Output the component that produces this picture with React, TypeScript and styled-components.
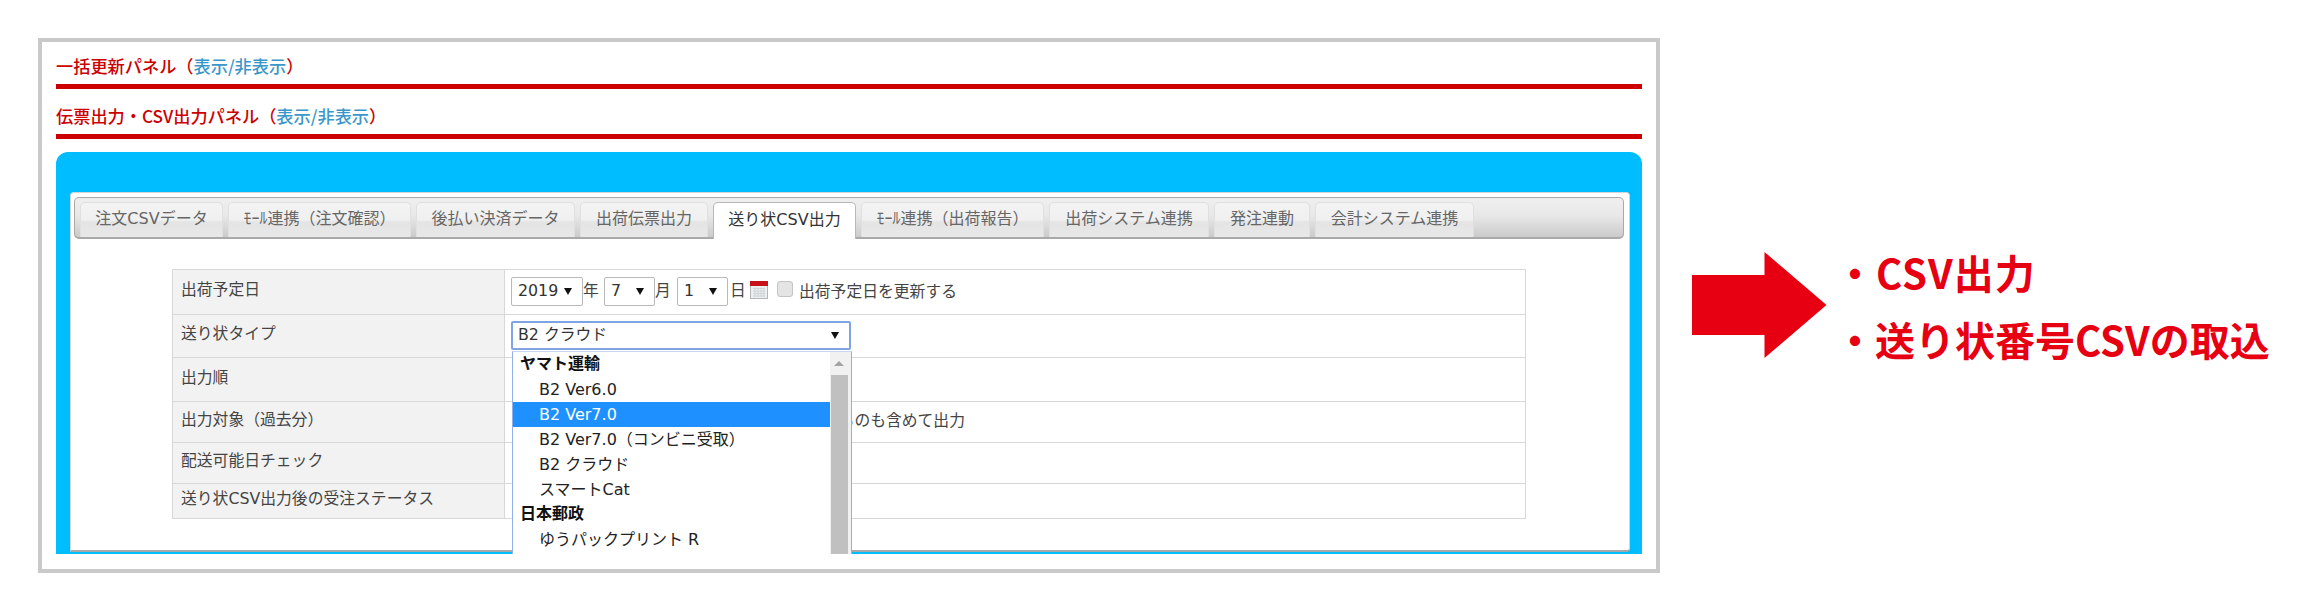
import React from "react";
import styled, { createGlobalStyle } from "styled-components";

const Global = createGlobalStyle`
  html, body { margin: 0; padding: 0; background: #fff; }
  body { font-family: "DejaVu Sans", "Noto Sans CJK JP", sans-serif; }
`;

const Page = styled.div`
  width: 2300px;
  height: 612px;
  box-sizing: border-box;
  padding: 38px 0 0 38px;
  display: flex;
  align-items: flex-start;
  overflow: hidden;
`;

const Frame = styled.div`
  width: 1622px;
  height: 535px;
  box-sizing: border-box;
  border: 4px solid #c9c9c9;
  padding: 0 14px;
  flex: none;
`;

const Heading = styled.div<{ $h: number }>`
  height: ${(p) => p.$h}px;
  box-sizing: border-box;
  display: flex;
  align-items: flex-end;
  padding-bottom: 8px;
  border-bottom: 5px solid #cc0000;
  font-family: "Noto Sans CJK JP", sans-serif;
  font-size: 17.2px;
  font-weight: 500;
  color: #cc0000;
  line-height: 20px;
`;

const Toggle = styled.a`
  color: #3a97c9;
`;

const Panel = styled.div`
  margin-top: 13px;
  height: 402px;
  box-sizing: border-box;
  background: #00bdff;
  border-radius: 12px 12px 0 0;
  padding: 40px 12px 0 14px;
  overflow: hidden;
`;

const Inner = styled.div`
  position: relative;
  height: 360px;
  box-sizing: border-box;
  background: #fff;
  border: 1px solid #d4d4d4;
  border-bottom: 2px solid #a8a8a8;
  border-radius: 4px 4px 4px 0;
  padding: 4px 5px 0 3px;
`;

const TabBar = styled.div`
  height: 42px;
  box-sizing: border-box;
  display: flex;
  align-items: flex-end;
  gap: 5px;
  padding: 0 0 0 5px;
  border: 1px solid #a9a9a9;
  border-bottom-width: 2px;
  border-radius: 5px;
  background: linear-gradient(#efefef 0%, #e8e8e8 45%, #cbcbcb 100%);
`;

const Tab = styled.div<{ $w: number; $active?: boolean }>`
  width: ${(p) => p.$w}px;
  height: ${(p) => (p.$active ? 37 : 35)}px;
  margin-bottom: ${(p) => (p.$active ? -2 : 0)}px;
  flex: none;
  box-sizing: border-box;
  display: flex;
  align-items: center;
  justify-content: center;
  padding-bottom: 3px;
  font-size: 16px;
  line-height: 1.2;
  white-space: nowrap;
  color: ${(p) => (p.$active ? "#333" : "#666")};
  border-radius: 5px 5px 0 0;
  border: 1px solid ${(p) => (p.$active ? "#b8b8b8" : "#e0e0e0")};
  border-bottom: none;
  background: ${(p) =>
    p.$active ? "#fff" : "linear-gradient(#f3f3f3 0%, #f0f0f0 50%, #e4e4e4 56%, #e8e8e8 100%)"};
`;

const FormTable = styled.table`
  width: 1354px;
  margin: 30px 0 0 98px;
  border-collapse: collapse;
  table-layout: fixed;
  font-size: 15.8px;
  line-height: 1.2;
  color: #444;
`;

const Row = styled.tr<{ $h: number }>`
  height: ${(p) => p.$h}px;
`;

const Th = styled.th`
  width: 332px;
  box-sizing: border-box;
  background: #f2f2f2;
  border: 1.5px solid #d8d8d8;
  font-weight: 400;
  text-align: left;
  padding: 0 0 3px 8px;
  white-space: nowrap;
`;

const Td = styled.td`
  border: 1.5px solid #d8d8d8;
  padding: 0 0 0 6px;
  vertical-align: middle;
`;

const DateLine = styled.div`
  display: flex;
  align-items: center;
  height: 28px;
  margin-top: -2px;
`;

const Select = styled.div<{ $w: number }>`
  width: ${(p) => p.$w}px;
  height: 29px;
  box-sizing: border-box;
  border: 1.5px solid #b9b9b9;
  border-radius: 2px;
  display: flex;
  align-items: center;
  justify-content: space-between;
  padding: 0 10px 0 6px;
  color: #333;
  background: #fff;
`;

const Caret = styled.span`
  width: 0;
  height: 0;
  border-left: 4px solid transparent;
  border-right: 4px solid transparent;
  border-top: 7px solid #111;
`;

const Unit = styled.span<{ $ml?: number; $w: number }>`
  width: ${(p) => p.$w}px;
  margin-left: ${(p) => p.$ml ?? 0}px;
  flex: none;
`;

const Calendar = styled.svg`
  margin: -3px 0 0 5px;
  flex: none;
`;

const Check = styled.span`
  width: 16px;
  height: 16px;
  box-sizing: border-box;
  margin: -4px 6px 0 9px;
  border: 1.5px solid #c4c4c4;
  border-radius: 3px;
  background: #e4e4e4;
  flex: none;
`;

const DateLabel = styled.span`
  margin-top: 2px;
  white-space: nowrap;
`;

const SelectWrap = styled.div`
  position: relative;
  width: 340px;
  height: 29px;
  margin-top: -1px;
`;

const OpenSelect = styled(Select)`
  width: 340px;
  border: 2px solid #7fa3e3;
  padding: 0 10px 0 5px;
`;

const Dropdown = styled.div`
  position: absolute;
  z-index: 2;
  left: 1px;
  top: 30px;
  width: 340px;
  height: 214px;
  box-sizing: border-box;
  display: flex;
  background: #fff;
  border: 1.5px solid #8fb0e8;
  border-top: 1px solid #c8d6ee;
  font-size: 16px;
`;

const List = styled.div`
  flex: 1;
  color: #222;
`;

const Group = styled.div`
  height: 25px;
  line-height: 24px;
  padding-left: 7px;
  font-weight: 700;
  color: #111;
`;

const Item = styled.div<{ $selected?: boolean }>`
  height: 25px;
  line-height: 25px;
  padding-left: 26px;
  background: ${(p) => (p.$selected ? "#1e90ff" : "transparent")};
  color: ${(p) => (p.$selected ? "#fff" : "#222")};
`;

const Scrollbar = styled.div`
  width: 21px;
  flex: none;
  background: #f1f1f1;
  display: flex;
  flex-direction: column;
  align-items: center;
  padding: 9px 3px 0 0;
  box-sizing: border-box;
`;

const ScrollUp = styled.span`
  width: 0;
  height: 0;
  border-left: 5px solid transparent;
  border-right: 5px solid transparent;
  border-bottom: 5px solid #a3a3a3;
`;

const Thumb = styled.div`
  width: 17px;
  margin-top: 9px;
  flex: 1;
  background: #c0c0c0;
`;

const BehindText = styled.div`
  margin: -1px 0 0 217px;
  white-space: nowrap;
`;

const Arrow = styled.svg`
  flex: none;
  margin: 214px 0 0 32px;
`;

const Notes = styled.div`
  margin: 201px 0 0 8px;
  font-family: "Noto Sans CJK JP", sans-serif;
  font-size: 40px;
  font-weight: 700;
  line-height: 67px;
  color: #e60012;
  white-space: nowrap;
`;

const NoteLine = styled.div<{ $spacing?: number }>`
  letter-spacing: ${(p) => p.$spacing ?? 0}px;
`;

const tabs: [string, number, boolean?][] = [
  ["注文CSVデータ", 143],
  ["ﾓｰﾙ連携（注文確認）", 183],
  ["後払い決済データ", 159],
  ["出荷伝票出力", 128],
  ["送り状CSV出力", 143, true],
  ["ﾓｰﾙ連携（出荷報告）", 183],
  ["出荷システム連携", 160],
  ["発注連動", 96],
  ["会計システム連携", 159],
];

export default function App() {
  return (
    <>
      <Global />
      <Page>
        <Frame>
          <Heading $h={47}>
            <span>
              一括更新パネル（<Toggle>表示/非表示</Toggle>）
            </span>
          </Heading>
          <Heading $h={50}>
            <span>
              伝票出力・CSV出力パネル（<Toggle>表示/非表示</Toggle>）
            </span>
          </Heading>
          <Panel>
            <Inner>
              <TabBar>
                {tabs.map(([label, w, active]) => (
                  <Tab key={label} $w={w} $active={active}>
                    {label}
                  </Tab>
                ))}
              </TabBar>
              <FormTable>
                <tbody>
                  <Row $h={45}>
                    <Th>出荷予定日</Th>
                    <Td>
                      <DateLine>
                        <Select $w={72}>
                          2019
                          <Caret />
                        </Select>
                        <Unit $w={21}>年</Unit>
                        <Select $w={51}>
                          7
                          <Caret />
                        </Select>
                        <Unit $w={22}>月</Unit>
                        <Select $w={51}>
                          1
                          <Caret />
                        </Select>
                        <Unit $w={15} $ml={2}>日</Unit>
                        <Calendar width="18" height="18" viewBox="0 0 18 18">
                          <rect x="0.5" y="0.5" width="17" height="17" fill="#eceff0" stroke="#b5b5b5" />
                          <rect x="0" y="0" width="18" height="5" fill="#c8101c" />
                          <path
                            d="M3 7.5h12M3 10h12M3 12.5h12M3 15h12M5 6.5v9.5M8 6.5v9.5M11 6.5v9.5M14 6.5v9.5"
                            stroke="#cfd3d6"
                            strokeWidth="1"
                            fill="none"
                          />
                        </Calendar>
                        <Check />
                        <DateLabel>出荷予定日を更新する</DateLabel>
                      </DateLine>
                    </Td>
                  </Row>
                  <Row $h={43}>
                    <Th>送り状タイプ</Th>
                    <Td>
                      <SelectWrap>
                        <OpenSelect $w={340}>
                          B2 クラウド
                          <Caret />
                        </OpenSelect>
                        <Dropdown>
                          <List>
                            <Group>ヤマト運輸</Group>
                            <Item>B2 Ver6.0</Item>
                            <Item $selected>B2 Ver7.0</Item>
                            <Item>B2 Ver7.0（コンビニ受取）</Item>
                            <Item>B2 クラウド</Item>
                            <Item>スマートCat</Item>
                            <Group>日本郵政</Group>
                            <Item>ゆうパックプリント R</Item>
                          </List>
                          <Scrollbar>
                            <ScrollUp />
                            <Thumb />
                          </Scrollbar>
                        </Dropdown>
                      </SelectWrap>
                    </Td>
                  </Row>
                  <Row $h={44}>
                    <Th>出力順</Th>
                    <Td />
                  </Row>
                  <Row $h={41}>
                    <Th>出力対象（過去分）</Th>
                    <Td>
                      <BehindText>過去に出力したものも含めて出力</BehindText>
                    </Td>
                  </Row>
                  <Row $h={41}>
                    <Th>配送可能日チェック</Th>
                    <Td />
                  </Row>
                  <Row $h={35}>
                    <Th>送り状CSV出力後の受注ステータス</Th>
                    <Td />
                  </Row>
                </tbody>
              </FormTable>
            </Inner>
          </Panel>
        </Frame>
        <Arrow width="135" height="106" viewBox="0 0 135 106">
          <path d="M0 23H72.5V0L134.5 53L72.5 106V83H0Z" fill="#e60012" />
        </Arrow>
        <Notes>
          <NoteLine $spacing={1}>・CSV出力</NoteLine>
          <NoteLine>・送り状番号CSVの取込</NoteLine>
        </Notes>
      </Page>
    </>
  );
}
